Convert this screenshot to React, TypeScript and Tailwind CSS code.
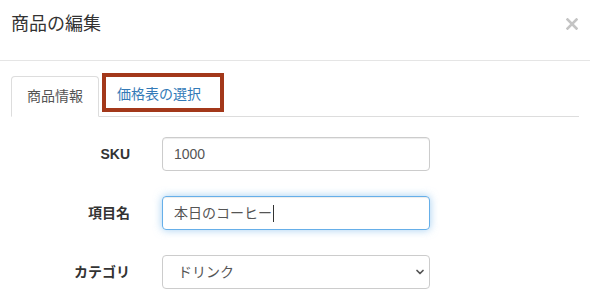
import { ChevronDown } from 'lucide-react'

const font = { fontFamily: '"Liberation Sans", "Noto Sans CJK JP", sans-serif' }

export default function App() {
  return (
    <div className="w-[590px] h-[299px] bg-white text-[#333] overflow-hidden" style={font}>
      {/* Header */}
      <div className="h-[61px] border-b border-[#e5e5e5]">
        <div className="h-[48px] px-[11px] flex items-center justify-between">
          <h4 className="text-[18px] leading-[26px]">商品の編集</h4>
          <button className="mr-[1px] mt-[-1px]" aria-label="close">
            <svg width="12" height="12" viewBox="0 0 12 12">
              <path d="M1.5 1.5 L10.5 10.5 M10.5 1.5 L1.5 10.5" stroke="#c4c4c4" strokeWidth="2.6" strokeLinecap="square" />
            </svg>
          </button>
        </div>
      </div>

      {/* Body */}
      <div className="px-[11px] pt-[15px]">
        {/* Tabs */}
        <div className="flex items-start border-b border-[#ddd]">
          <div className="w-[88px] h-[41px] -mb-px border border-[#ddd] border-b-transparent rounded-t-[4px] bg-white flex items-center justify-center text-[14px] text-[#555]">
            商品情報
          </div>
          <div className="ml-[3px] -mt-[3px] w-[122px] h-[39px] border-4 border-[#a3381a] pl-[11px] pt-[7px] text-[14px] leading-[20px] text-[#337ab7]">
            価格表の選択
          </div>
        </div>

        {/* Form */}
        <div className="pt-[20px] flex flex-col gap-[25px] text-[14px]">
          <div className="flex items-center">
            <label className="w-[119px] text-right font-bold">SKU</label>
            <div className="ml-[32px] w-[268px] h-[34px] border border-[#ccc] rounded-[4px] pl-[11px] flex items-center text-[#555] shadow-[inset_0_1px_1px_rgba(0,0,0,0.075)]">
              1000
            </div>
          </div>
          <div className="flex items-center">
            <label className="w-[119px] text-right font-bold">項目名</label>
            <div className="ml-[32px] w-[268px] h-[34px] border border-[#66afe9] rounded-[4px] pl-[11px] flex items-center text-[#555] shadow-[inset_0_1px_1px_rgba(0,0,0,0.075),0_0_8px_rgba(102,175,233,0.6)]">
              本日のコーヒー
              <span className="w-px h-[17px] bg-[#333] ml-[1px]" />
            </div>
          </div>
          <div className="flex items-center">
            <label className="w-[119px] text-right font-bold">カテゴリ</label>
            <div className="ml-[32px] w-[268px] h-[34px] border border-[#ccc] rounded-[4px] pl-[15px] pr-[3px] flex items-center justify-between text-[#555]">
              ドリンク
              <ChevronDown size={12} strokeWidth={3.5} className="text-[#555]" />
            </div>
          </div>
        </div>
      </div>
    </div>
  )
}
